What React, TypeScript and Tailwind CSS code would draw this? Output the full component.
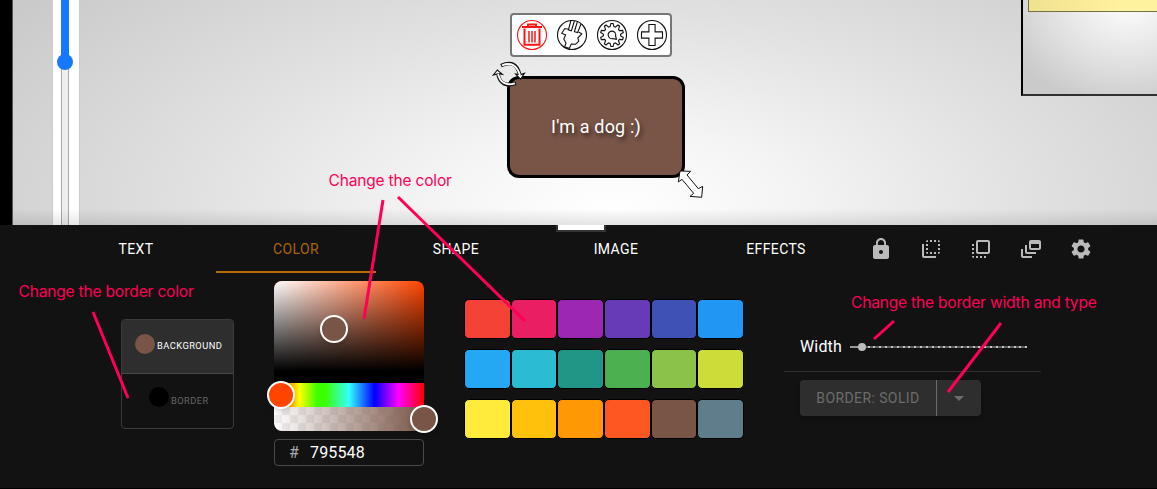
import React from "react";
import {
  MdLock,
  MdFlipToBack,
  MdFlipToFront,
  MdDynamicFeed,
  MdSettings,
  MdArrowDropDown,
} from "react-icons/md";

const tabs = ["TEXT", "COLOR", "SHAPE", "IMAGE", "EFFECTS"];

const swatches = [
  "bg-[#f44336]", "bg-[#e91e63]", "bg-[#9c27b0]", "bg-[#673ab7]", "bg-[#3f51b5]", "bg-[#2196f3]",
  "bg-[#24a8f4]", "bg-[#2bbbd3]", "bg-[#219687]", "bg-[#4caf50]", "bg-[#8bc34a]", "bg-[#cddc39]",
  "bg-[#ffeb3b]", "bg-[#ffc10b]", "bg-[#ff9804]", "bg-[#ff5722]", "bg-[#795548]", "bg-[#607d8b]",
];

const actions = [MdLock, MdFlipToBack, MdFlipToFront, MdDynamicFeed, MdSettings];

function gearPath() {
  const points: string[] = [];
  const teeth = 10;
  for (let i = 0; i < teeth; i++) {
    const a = (i / teeth) * Math.PI * 2 - Math.PI / 2;
    [[-0.22, 8.6], [-0.09, 11.6], [0.09, 11.6], [0.22, 8.6]].forEach(([d, r]) => {
      points.push(`${(16 + Math.cos(a + d) * r).toFixed(2)} ${(16 + Math.sin(a + d) * r).toFixed(2)}`);
    });
  }
  return `M${points.join("L")}Z`;
}

function RoundIcon({ color, children }: { color: string; children: React.ReactNode }) {
  return (
    <svg className={`size-8 ${color}`} viewBox="0 0 32 32" fill="none" stroke="currentColor" strokeWidth="1.1">
      <circle cx="16" cy="16" r="14.5" />
      {children}
    </svg>
  );
}

function NodeToolbar() {
  return (
    <div className="absolute left-[497px] top-[13px] flex h-11 w-[162px] items-center gap-2 rounded-[4px] border-2 border-[#777] bg-white pl-1">
      <RoundIcon color="text-[#ff1414]">
        <path d="M6 8h20M12 7.3V5.5h8v1.8" strokeWidth="1.9" />
        <path d="M8.5 9.5V25.8H23.5V9.5" strokeWidth="2" />
        <path d="M13 12v11.5M16 12v11.5M19 12v11.5" strokeWidth="1.5" />
      </RoundIcon>
      <RoundIcon color="text-[#111]">
        <path d="M12.8 10.3L8.8 9.5L5.8 14.2L9.6 16L7.8 20L10 24L8.6 28L13.3 29.4L15.3 25L19.6 25.2L22.8 22.2L21.8 19L25.8 14.8L22.6 13" />
        <path d="M14.9 1.7L12.4 10.9L15.4 11.8L18.4 2M21.4 2.6L18.4 12.7L21.6 13.6L25 5" />
      </RoundIcon>
      <RoundIcon color="text-[#111]">
        <path d={gearPath()} />
        <path d="M17 19.6A3.8 3.8 0 1 1 19.6 17L20.4 20.2Z" />
      </RoundIcon>
      <RoundIcon color="text-[#111]">
        <path d="M12.9 5.5h6.2v7.4h7.4v6.2h-7.4v7.4h-6.2v-7.4H5.5v-6.2h7.4z" />
      </RoundIcon>
    </div>
  );
}

function Canvas() {
  return (
    <div className="relative min-w-0 flex-1 overflow-hidden border-l border-[#555] bg-[radial-gradient(ellipse_730px_340px_at_600px_208px,#ffffff_0%,#f4f4f4_25%,#e1e1e1_57%,#cacaca_100%)]">
      <div className="absolute left-[39px] top-0 flex h-full w-[28px] border-x border-[#ccc] bg-white pl-2">
        <div className="h-full w-2 border-x border-[#aaa] bg-[#eee]">
          <div className="relative -left-px h-[62px] w-2 bg-[#1677ff]" />
        </div>
        <div className="absolute left-[4px] top-[54px] size-4 rounded-full bg-[#1677ff]" />
      </div>

      <div className="absolute left-[1008px] top-0 h-24 w-44 border-b-2 border-l-2 border-b-[#303030] border-l-black bg-[radial-gradient(ellipse_130px_110px_at_104px_-2px,#ffffff_0%,#dedede_65%,#cacaca_100%)]">
        <div className="absolute left-[5px] top-0 h-3 w-40 border-b border-l border-[#777044] bg-linear-to-r from-[#eee18f] to-[#fff3a0] to-60%" />
      </div>

      <NodeToolbar />

      <div className="absolute left-[494px] top-[76px] flex h-[102px] w-[178px] items-center justify-center rounded-xl border-[3px] border-black bg-[#795548] pb-px font-[Roboto,sans-serif] text-[18px] tracking-[0.15px] text-white [text-shadow:2px_3px_4px_rgba(0,0,0,0.6)]">
        I'm a dog :)
      </div>

      <svg className="absolute left-[477px] top-[56px] h-8 w-10" viewBox="0 168 120 96" fill="none">
        <g stroke="#111" strokeWidth="11">
          <path d="M33 197Q78 176 89 224M78 250Q32 265 24 222" />
        </g>
        <path d="M77 222L92 238L103 220L92 224ZM10 225L22 210L37 223L25 221Z" fill="#fff" stroke="#111" strokeWidth="3.5" />
        <path d="M36 196Q76 180 90 226M75 250Q34 262 24 221" stroke="#fff" strokeWidth="5.5" />
      </svg>
      <svg className="absolute left-[663px] top-[168px] h-8 w-8" viewBox="558 204 96 96">
        <path d="M570 213L602 214L591 225L625 266L638 259L635 292L600 289L611 280L576 238L565 246Z" fill="#fff" stroke="#111" strokeWidth="3" />
      </svg>
      <div className="absolute bottom-0 left-0 h-4 w-full bg-linear-to-b from-transparent to-black/10" />
    </div>
  );
}

function Picker() {
  return (
    <div className="flex w-[150px] flex-col">
      <div className="relative flex h-[150px] flex-col">
        <div className="h-[102px] rounded-t-lg border-b-[12px] border-black bg-[#ff4400] bg-[linear-gradient(to_top,#000,transparent),linear-gradient(to_right,#fff,transparent)]" />
        <div className="h-6 bg-[linear-gradient(to_right,#f00_0%,#ff0_17%,#3cff00_29%,#3cff00_34%,#33ffff_50%,#00f_67%,#f0f_83%,#f00_100%)]" />
        <div className="h-6 rounded-b-lg bg-[linear-gradient(to_right,transparent,#795548),repeating-conic-gradient(#eee_0%_25%,#fff_0%_50%)] bg-size-[100%_100%,16px_16px]" />
        <div className="absolute left-[46px] top-[34px] size-7 rounded-full border-2 border-white bg-[#795548] shadow-md" />
        <div className="absolute left-[-7px] top-[100px] size-7 rounded-full border-2 border-white bg-[#ff4400] shadow-md" />
        <div className="absolute left-[136px] top-[124px] size-7 rounded-full border-2 border-white bg-[#795548] shadow-md" />
      </div>
      <div className="mt-2 flex h-[27px] items-center rounded border border-[#4a4a4a] pl-[14px] text-base text-white">
        <span className="w-[21px] text-[#aaa]">#</span>
        <span className="tracking-[0.15px]">795548</span>
      </div>
    </div>
  );
}

function BorderControls() {
  return (
    <div className="mt-[41px] flex w-[257px] flex-col">
      <div className="flex h-[50px] items-center border-b border-[#2f2f2f] pl-4 text-base text-white">
        <span className="w-[50px] tracking-[0.15px]">Width</span>
        <div className="relative h-0.5 w-[177px] bg-[repeating-linear-gradient(to_right,#c4c4c4_0px_2px,#606060_2px_5.84px)]">
          <div className="h-0.5 w-3 bg-[#999]" />
          <div className="absolute left-2 top-[-3px] size-2 rounded-full bg-[#bdbdbd]" />
        </div>
      </div>
      <div className="ml-4 mt-2 flex h-9 w-[181px] rounded bg-[#2e2e2e] text-[14px] tracking-[0.4px] text-[#6c6c6c] shadow-md">
        <div className="flex w-[137px] items-center justify-center border-r border-[#6c6c6c]">BORDER: SOLID</div>
        <div className="flex flex-1 items-center justify-center">
          <MdArrowDropDown className="size-6" />
        </div>
      </div>
    </div>
  );
}

function Panel() {
  return (
    <div className="relative flex h-[264px] flex-col border-b border-black bg-[#121212]">
      <div className="absolute left-[556px] top-0 h-[7px] w-[50px] border-2 border-t-0 border-[#333] bg-white" />
      <div className="flex h-12 pl-14">
        {tabs.map((tab) => (
          <div
            key={tab}
            className={`flex w-40 items-center justify-center border-b-2 pt-0.5 text-[14px] tracking-[0.4px] ${
              tab === "COLOR" ? "border-[#b76c0a] text-[#a9650f]" : "border-transparent text-white"
            }`}
          >
            {tab}
          </div>
        ))}
        <div className="flex items-center text-[#bababa]">
          {actions.map((Icon, i) => (
            <div key={i} className="flex w-[50px] justify-center">
              <Icon className="size-6" />
            </div>
          ))}
        </div>
      </div>
      <div className="flex pl-[121px] pt-2">
        <div className="mr-10 mt-[38px] flex h-[110px] w-[113px] flex-col overflow-hidden rounded border border-[#3b3b3b] text-[9.3px] tracking-[0.46px]">
          <div className="flex h-[54px] items-center gap-[2px] border-b border-[#484848] bg-[#2e2e2e] pl-[13px] text-white">
            <div className="-mt-[6px] size-5 rounded-full bg-[#795548]" />
            <span className="-mt-px">BACKGROUND</span>
          </div>
          <div className="flex flex-1 items-center gap-[2px] pl-[27px] text-[#666]">
            <div className="-mt-[8px] size-5 rounded-full bg-black" />
            <span>BORDER</span>
          </div>
        </div>
        <Picker />
        <div className="ml-10 mr-10 mt-[18px] grid h-[140px] w-[280px] grid-cols-6 content-start gap-y-[10px]">
          {swatches.map((color) => (
            <div key={color} className={`h-10 rounded-[5px] border border-black ${color}`} />
          ))}
        </div>
        <BorderControls />
      </div>
    </div>
  );
}

function Annotations() {
  return (
    <div className="pointer-events-none absolute inset-0 whitespace-nowrap font-[Inter,sans-serif] text-[15.5px] leading-5 tracking-[-0.17px] text-[#ff0055]">
      <svg className="absolute inset-0 h-full w-full" viewBox="0 0 1157 489" stroke="#ff0055" strokeWidth="3">
        <path d="M93 312L128 398M383 200L364 319M398 197L525 321M894 321L874 339M1001 323L948 392" />
      </svg>
      <span className="absolute left-[328.5px] top-[171px]">Change the color</span>
      <span className="absolute left-[18.5px] top-[282px]">Change the border color</span>
      <span className="absolute left-[851px] top-[293px]">Change the border width and type</span>
    </div>
  );
}

export default function App() {
  return (
    <div className="relative flex h-[489px] w-[1157px] flex-col overflow-hidden font-[Roboto,sans-serif]">
      <div className="flex h-[225px]">
        <div className="w-3 bg-black" />
        <Canvas />
      </div>
      <Panel />
      <Annotations />
    </div>
  );
}
